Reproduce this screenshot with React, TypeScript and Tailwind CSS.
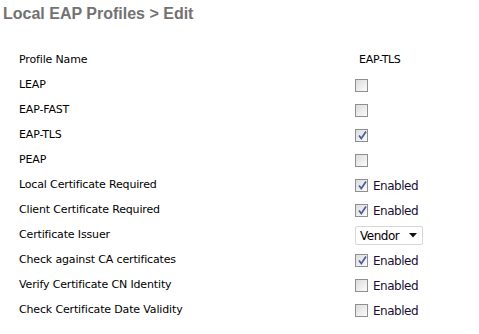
import React from "react";

function Box({ checked }: { checked?: boolean }) {
  return (
    <span className="relative inline-block w-[13px] h-[13px] border border-[#8e8f8f] bg-gradient-to-br from-[#dcdcdc] to-[#fbfbfb] shrink-0">
      {checked && (
        <svg className="absolute left-[1px] top-[0px]" width="11" height="11" viewBox="0 0 11 11">
          <path d="M2 5.5 L4.3 8.5 L9 1.5" fill="none" stroke="#4b5e9b" strokeWidth="1.7" />
        </svg>
      )}
    </span>
  );
}

type Row = { label: string; kind: "text" | "box" | "boxen" | "select"; checked?: boolean; value?: string };

const rows: Row[] = [
  { label: "Profile Name", kind: "text", value: "EAP-TLS" },
  { label: "LEAP", kind: "box" },
  { label: "EAP-FAST", kind: "box" },
  { label: "EAP-TLS", kind: "box", checked: true },
  { label: "PEAP", kind: "box" },
  { label: "Local Certificate Required", kind: "boxen", checked: true },
  { label: "Client Certificate Required", kind: "boxen", checked: true },
  { label: "Certificate Issuer", kind: "select" },
  { label: "Check against CA certificates", kind: "boxen", checked: true },
  { label: "Verify Certificate CN Identity", kind: "boxen" },
  { label: "Check Certificate Date Validity", kind: "boxen" },
];

export default function App() {
  return (
    <div className="w-[479px] h-[334px] bg-white overflow-hidden">
      <div className="pl-[3px] pt-[4px] text-[16px] leading-[20px] font-bold text-[#727272]" style={{ fontFamily: "'Liberation Sans', Arial, sans-serif" }}>
        Local EAP Profiles &gt; Edit
      </div>
      <div className="mt-[24px] flex flex-col text-[11px] text-black" style={{ fontFamily: "'DejaVu Sans', Tahoma, sans-serif" }}>
        {rows.map((r) => (
          <div key={r.label} className="h-[25px] flex items-center">
            <div className="w-[355px] pl-[19px] tracking-[-0.15px]">{r.label}</div>
            <div className="flex items-center">
              {r.kind === "text" && <span className="pl-[4px] tracking-[-0.3px]">{r.value}</span>}
              {r.kind === "box" && <Box checked={r.checked} />}
              {r.kind === "boxen" && (
                <>
                  <Box checked={r.checked} />
                  <span className="ml-[5px] text-[12px] tracking-[-0.5px] text-[#1a0f33]">Enabled</span>
                </>
              )}
              {r.kind === "select" && (
                <div className="w-[68px] h-[19px] border border-[#d6d6d6] rounded-[2px] flex items-center justify-between pl-[4px] pr-[5px] text-[12px] tracking-[-0.5px]">
                  <span>Vendor</span>
                  <svg width="8" height="5" viewBox="0 0 8 5"><path d="M0 0 H8 L4 4.5 Z" fill="#111" /></svg>
                </div>
              )}
            </div>
          </div>
        ))}
      </div>
    </div>
  );
}
